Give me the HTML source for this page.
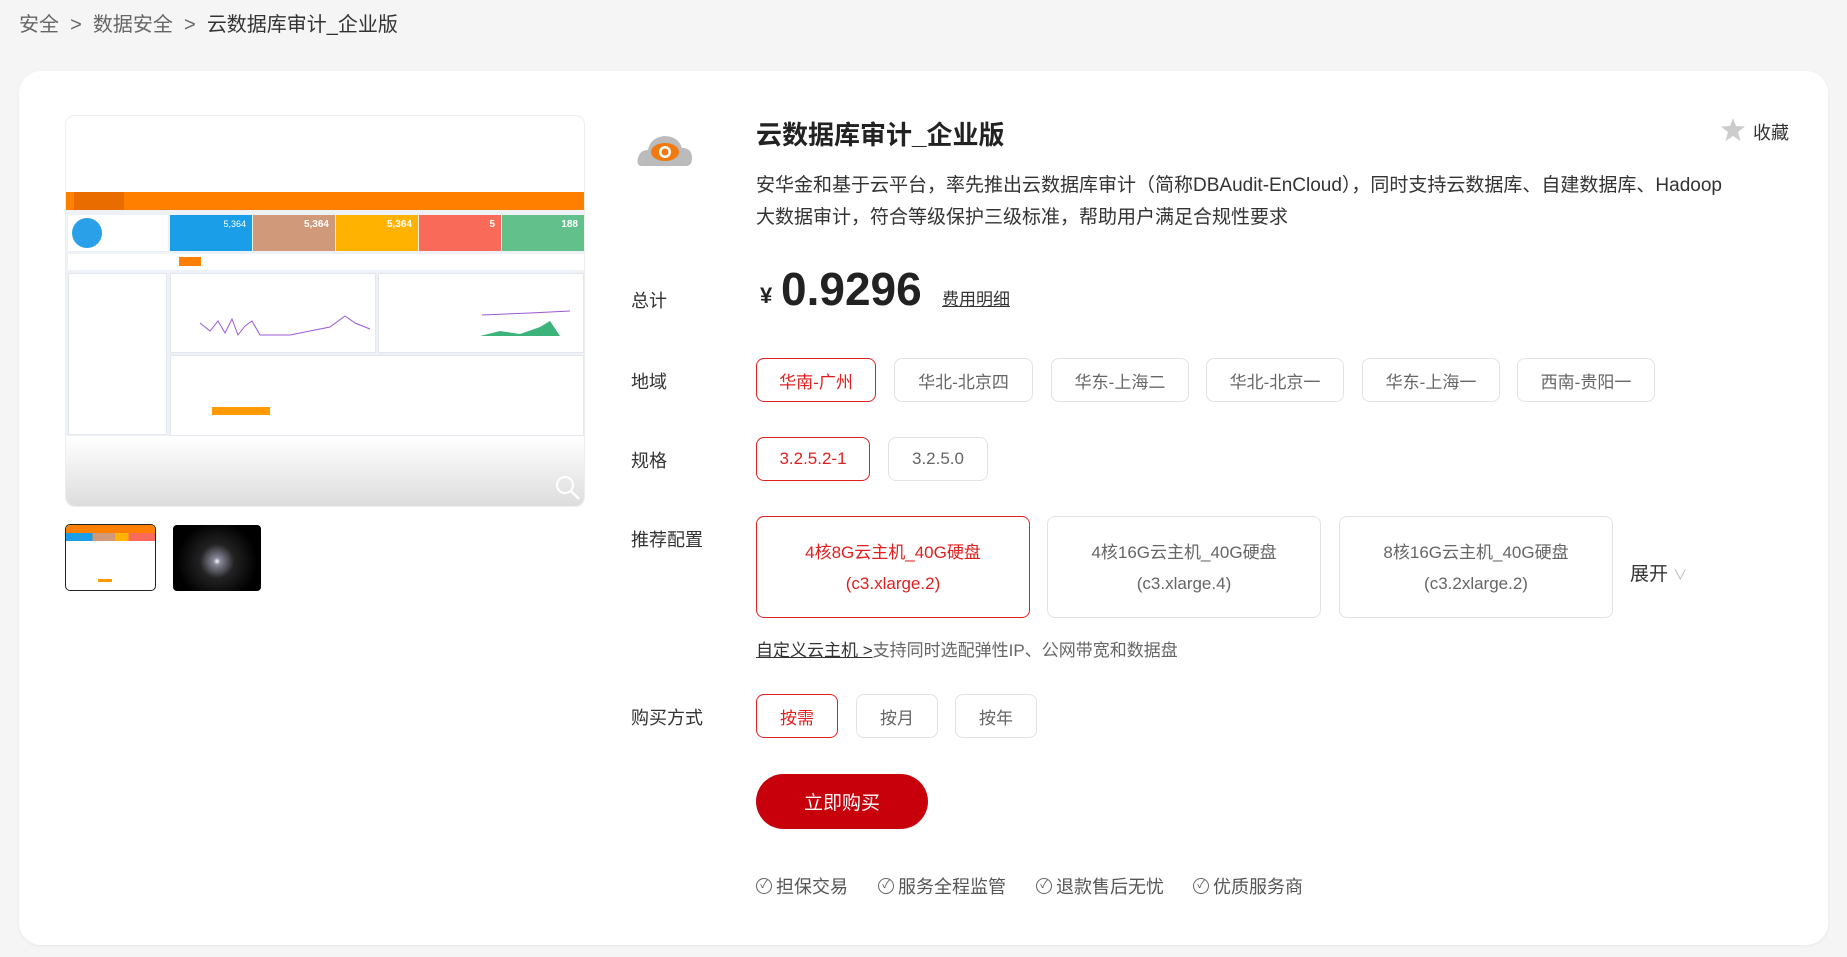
<!DOCTYPE html>
<html><head><meta charset="utf-8">
<style>
*{box-sizing:border-box;margin:0;padding:0}
body{width:1847px;height:957px;background:#f5f5f5;font-family:"Liberation Sans","Noto Sans CJK SC",sans-serif;color:#333;position:relative;overflow:hidden}
.a{position:absolute}
.bc{left:19px;top:8px;font-size:20px;color:#666;white-space:nowrap}
.bc b{font-weight:normal;color:#333}
.card{left:19px;top:71px;width:1809px;height:874px;background:#fff;border-radius:22px;box-shadow:0 1px 3px rgba(0,0,0,.06)}
.lbl{left:631px;font-size:18px;color:#333}
.btn{position:absolute;height:44px;border:1px solid #e3e3e3;border-radius:8px;font-size:17px;color:#666;display:flex;align-items:center;justify-content:center}
.box{position:absolute;top:516px;width:274px;height:102px;border:1px solid #e3e3e3;border-radius:8px;font-size:17px;color:#666;text-align:center;line-height:31px;padding-top:20px}
.sel{border-color:#e02020;color:#e02020}
.img{left:65px;top:115px;width:520px;height:392px;border:1px solid #eee;border-radius:10px;overflow:hidden;background:#fff}
.t{position:absolute;color:#fff;font-size:9px;text-align:right;padding:4px 6px}
.pn{position:absolute;background:#fff;border:1px solid #e4e8ee}
.g{position:absolute;top:874px;height:24px;font-size:18px;color:#555;white-space:nowrap;display:flex;align-items:center}
.g i{display:inline-block;width:16px;height:16px;border:1.5px solid #666;border-radius:50%;text-align:center;font-size:11px;line-height:13px;font-style:normal;margin-right:4px}
</style></head><body>
<div class="a bc">安全 &nbsp;&gt;&nbsp; 数据安全 &nbsp;&gt;&nbsp; <b>云数据库审计_企业版</b></div>
<div class="a card"></div>

<div class="a img">
  <div class="a" style="left:0;top:76px;width:520px;height:18px;background:#ff7f00"></div>
  <div class="a" style="left:8px;top:76px;width:50px;height:18px;background:#e86c00"></div>
  <div class="a" style="left:0;top:94px;width:520px;height:226px;background:#eef1f5"></div>
  <div class="a" style="left:2px;top:99px;width:100px;height:36px;background:#fff"></div>
  <div class="a" style="left:6px;top:102px;width:30px;height:30px;border-radius:50%;background:#2aa0e8"></div>
  <div class="t" style="left:104px;top:99px;width:82px;height:36px;background:#1a9ee8">5,364</div>
  <div class="t" style="left:187px;top:99px;width:82px;height:36px;background:#d09a7a;font-size:10px;font-weight:bold">5,364</div>
  <div class="t" style="left:270px;top:99px;width:82px;height:36px;background:#ffb300;font-size:10px;font-weight:bold">5,364</div>
  <div class="t" style="left:353px;top:99px;width:82px;height:36px;background:#fa6a58;font-size:10px;font-weight:bold">5</div>
  <div class="t" style="left:436px;top:99px;width:82px;height:36px;background:#62c08a;font-size:10px;font-weight:bold">188</div>
  <div class="a" style="left:2px;top:138px;width:516px;height:16px;background:#fff"></div>
  <div class="a" style="left:113px;top:141px;width:22px;height:9px;background:#ff7f00"></div>
  <div class="pn" style="left:2px;top:157px;width:99px;height:162px"></div>
  <div class="pn" style="left:104px;top:157px;width:206px;height:80px"></div>
  <div class="pn" style="left:312px;top:157px;width:206px;height:80px"></div>
  <div class="pn" style="left:104px;top:239px;width:414px;height:81px"></div>
  <div class="a" style="left:146px;top:291px;width:58px;height:8px;background:#ff9a00"></div>
  <svg class="a" style="left:104px;top:185px" width="414" height="50"><polyline fill="none" stroke="#9b59d6" stroke-width="1" points="30,22 40,30 48,20 55,32 62,18 68,34 75,25 82,20 90,34 120,34 140,30 160,26 175,15 185,22 200,28"/><polygon fill="#3bb37a" points="310,35 330,30 350,33 370,26 380,20 390,35"/><polyline fill="none" stroke="#9b59d6" points="312,14 360,12 400,10"/></svg>
  <div class="a" style="left:0;top:320px;width:520px;height:72px;background:linear-gradient(#fff,#dcdcdc)"></div>
  <svg class="a" style="left:488px;top:358px" width="28" height="28"><circle cx="11" cy="11" r="8" fill="none" stroke="#fff" stroke-width="2"/><line x1="17" y1="17" x2="25" y2="25" stroke="#fff" stroke-width="2.5"/></svg>
</div>
<div class="a" style="left:65px;top:524px;width:91px;height:67px;border:1px solid #222;border-radius:5px;overflow:hidden;background:#fff">
  <div style="height:8px;background:#ff7f00"></div><div style="height:8px;background:linear-gradient(90deg,#1a9ee8 30%,#d09a7a 30%,#d09a7a 55%,#ffb300 55%,#ffb300 70%,#fa6a58 70%)"></div>
  <div class="a" style="left:32px;top:54px;width:14px;height:3px;background:#ff9a00"></div>
</div>
<div class="a" style="left:173px;top:525px;width:88px;height:66px;border-radius:4px;background:radial-gradient(circle at 50% 55%,#fff 0,#889 6%,#222 30%,#000 70%)"></div>

<svg class="a" style="left:636px;top:132px" width="58" height="36" viewBox="0 0 58 36"><path d="M6 34 Q0 34 2 26 Q4 18 12 18 Q14 6 28 4 Q42 4 46 16 Q56 16 56 26 Q56 34 50 34Z" fill="#bbb"/><ellipse cx="29" cy="20" rx="14" ry="9" fill="#f07a10"/><circle cx="29" cy="20" r="6" fill="#fff"/><circle cx="29" cy="20" r="3.5" fill="#f07a10"/></svg>
<div class="a" style="left:756px;top:115px;font-size:26px;font-weight:bold;color:#222">云数据库审计_企业版</div>
<svg class="a" style="left:1721px;top:118px" width="24" height="23" viewBox="0 0 24 23"><path d="M12 0 L15 8 L24 8.5 L17 14 L19.5 23 L12 18 L4.5 23 L7 14 L0 8.5 L9 8Z" fill="#ccc"/></svg>
<div class="a" style="left:1753px;top:119px;font-size:18px;color:#333">收藏</div>
<div class="a" style="left:756px;top:170px;width:1050px;font-size:19px;line-height:32px;color:#333;white-space:nowrap">安华金和基于云平台，率先推出云数据库审计（简称DBAudit-EnCloud），同时支持云数据库、自建数据库、Hadoop<br>大数据审计，符合等级保护三级标准，帮助用户满足合规性要求</div>

<div class="a lbl" style="top:287px">总计</div>
<div class="a" style="left:760px;top:283px;font-size:22px;font-weight:bold;color:#222">¥</div>
<div class="a" style="left:781px;top:262px;font-size:46px;font-weight:bold;color:#222">0.9296</div>
<div class="a" style="left:942px;top:285px;font-size:17px;color:#333;text-decoration:underline">费用明细</div>

<div class="a lbl" style="top:368px">地域</div>
<div class="btn sel" style="left:756px;top:358px;width:120px">华南-广州</div>
<div class="btn" style="left:894px;top:358px;width:139px">华北-北京四</div>
<div class="btn" style="left:1051px;top:358px;width:138px">华东-上海二</div>
<div class="btn" style="left:1206px;top:358px;width:138px">华北-北京一</div>
<div class="btn" style="left:1362px;top:358px;width:138px">华东-上海一</div>
<div class="btn" style="left:1517px;top:358px;width:138px">西南-贵阳一</div>

<div class="a lbl" style="top:447px">规格</div>
<div class="btn sel" style="left:756px;top:437px;width:114px">3.2.5.2-1</div>
<div class="btn" style="left:888px;top:437px;width:100px">3.2.5.0</div>

<div class="a lbl" style="top:526px">推荐配置</div>
<div class="box sel" style="left:756px">4核8G云主机_40G硬盘<br>(c3.xlarge.2)</div>
<div class="box" style="left:1047px">4核16G云主机_40G硬盘<br>(c3.xlarge.4)</div>
<div class="box" style="left:1339px">8核16G云主机_40G硬盘<br>(c3.2xlarge.2)</div>
<div class="a" style="left:1630px;top:559px;font-size:19px;color:#333">展开 <span style="color:#bbb;font-size:14px">&#8744;</span></div>
<div class="a" style="left:756px;top:636px;font-size:17px;color:#666"><span style="color:#333;text-decoration:underline">自定义云主机 &gt;</span>支持同时选配弹性IP、公网带宽和数据盘</div>

<div class="a lbl" style="top:704px">购买方式</div>
<div class="btn sel" style="left:756px;top:694px;width:82px">按需</div>
<div class="btn" style="left:856px;top:694px;width:82px">按月</div>
<div class="btn" style="left:955px;top:694px;width:82px">按年</div>

<div class="a" style="left:756px;top:774px;width:172px;height:55px;border-radius:28px;background:#c7000b;color:#fff;font-size:19px;display:flex;align-items:center;justify-content:center">立即购买</div>

<div class="g" style="left:756px"><i>&#10003;</i>担保交易</div>
<div class="g" style="left:878px"><i>&#10003;</i>服务全程监管</div>
<div class="g" style="left:1036px"><i>&#10003;</i>退款售后无忧</div>
<div class="g" style="left:1193px"><i>&#10003;</i>优质服务商</div>
</body></html>
